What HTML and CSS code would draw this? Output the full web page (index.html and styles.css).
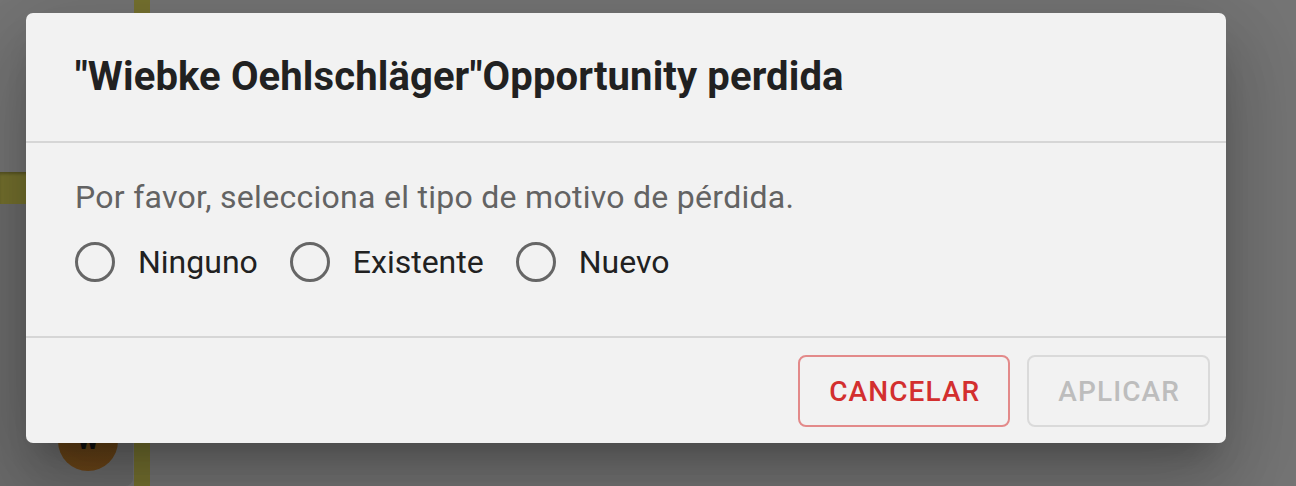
FILE: index.html
```html
<!DOCTYPE html>
<html lang="es">

<head>
    <meta charset="UTF-8">
    <title>Opportunity perdida</title>
    <link rel="stylesheet" href="styles.css">
</head>

<body>
    <div class="board">
        <div class="lane-bar"></div>
        <div class="row-bar"></div>
        <div class="card">
            <div class="avatar">W</div>
        </div>
    </div>

    <div class="overlay">
        <div class="dialog">
            <div class="dialog-header">
                <h2 class="dialog-title">"Wiebke Oehlschläger"Opportunity perdida</h2>
            </div>
            <div class="dialog-content">
                <p class="hint">Por favor, selecciona el tipo de motivo de pérdida.</p>
                <div class="radio-group">
                    <label class="radio"><span class="radio-circle"></span>Ninguno</label>
                    <label class="radio"><span class="radio-circle"></span>Existente</label>
                    <label class="radio"><span class="radio-circle"></span>Nuevo</label>
                </div>
            </div>
            <div class="dialog-actions">
                <button class="btn btn-cancel">CANCELAR</button>
                <button class="btn btn-apply" disabled>APLICAR</button>
            </div>
        </div>
    </div>
</body>

</html>
```

FILE: styles.css
```css
* {
    margin: 0;
    padding: 0;
    box-sizing: border-box;
}

html,
body {
    width: 100%;
    height: 100%;
}

body {
    background: #757575;
    font-family: Roboto, "Liberation Sans", sans-serif;
    overflow: hidden;
    position: relative;
}

/* page underneath the backdrop */
.board {
    position: absolute;
    inset: 0;
}

.lane-bar {
    position: absolute;
    left: 134px;
    top: 0;
    width: 16px;
    height: 100%;
    background: #767230;
}

.row-bar {
    position: absolute;
    left: 0;
    top: 172px;
    width: 134px;
    height: 32px;
    background: #75712e;
    box-shadow: inset 0 3px 3px -1px rgba(0, 0, 0, 0.25);
}

.card {
    position: absolute;
    left: 0;
    top: 204px;
    width: 133px;
    height: 282px;
    background: #6c6c6c;
    border-bottom-right-radius: 8px;
}

.avatar {
    position: absolute;
    left: 58px;
    top: 207px;
    width: 60px;
    height: 60px;
    border-radius: 50%;
    background: linear-gradient(#5c3e14, #6e4719);
    color: #111;
    font-size: 24px;
    font-weight: 700;
    display: flex;
    align-items: center;
    justify-content: center;
}

.overlay {
    position: absolute;
    inset: 0;
}

.dialog {
    position: absolute;
    left: 26px;
    top: 13px;
    width: 1200px;
    height: 430px;
    background: #f2f2f2;
    border-radius: 7px;
    display: flex;
    flex-direction: column;
    box-shadow: 0 22px 30px -14px rgba(0, 0, 0, 0.2),
        0 48px 76px 6px rgba(0, 0, 0, 0.14),
        0 18px 92px 16px rgba(0, 0, 0, 0.12);
}

.dialog-header {
    padding: 32px 49px;
    border-bottom: 2px solid #d6d6d6;
}

.dialog-title {
    font-size: 40px;
    line-height: 64px;
    font-weight: 700;
    letter-spacing: 0.12px;
    color: #212121;
}

.dialog-content {
    flex: 1;
    padding: 34px 49px 0;
    border-bottom: 2px solid #d6d6d6;
}

.hint {
    font-size: 32px;
    line-height: 40px;
    letter-spacing: 0.28px;
    color: #636363;
}

.radio-group {
    display: flex;
    align-items: center;
    margin-top: 21px;
}

.radio {
    display: flex;
    align-items: center;
    gap: 23px;
    font-size: 32px;
    line-height: 48px;
    color: #212121;
    margin-right: 32px;
}

.radio-circle {
    width: 40px;
    height: 40px;
    border: 3px solid #666;
    border-radius: 50%;
}

.dialog-actions {
    display: flex;
    justify-content: flex-end;
    gap: 17px;
    padding: 17px 16px 16px;
}

.btn {
    height: 72px;
    padding: 0 28px 0 29px;
    border-radius: 8px;
    background: transparent;
    font-family: Roboto, "Liberation Sans", sans-serif;
    font-size: 28px;
    font-weight: 500;
    letter-spacing: 1.1px;
}

.btn-cancel {
    border: 2px solid #e38a8a;
    color: #d32f2f;
}

.btn-apply {
    border: 2px solid #dadada;
    color: #bdbdbd;
}
```
